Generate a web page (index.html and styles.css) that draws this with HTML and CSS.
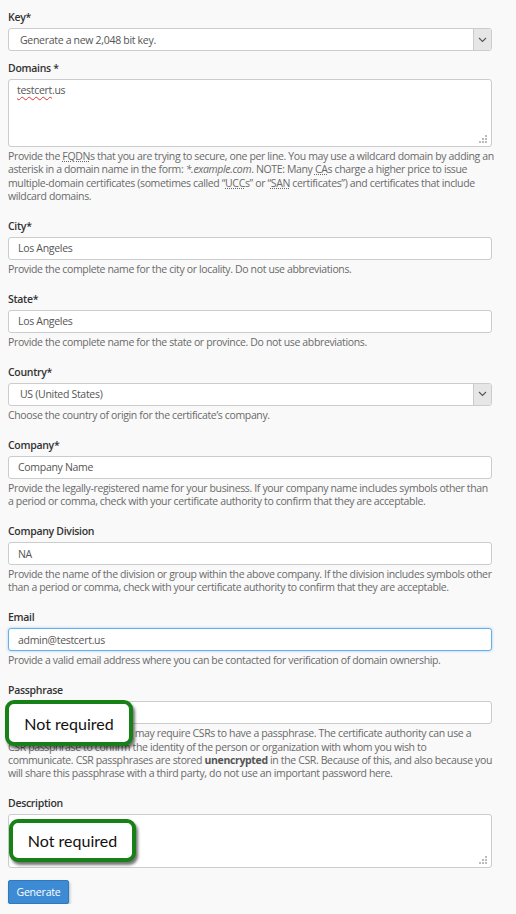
FILE: index.html
```html
<!DOCTYPE html>
<html>
<head>
<meta charset="utf-8">
<link rel="stylesheet" href="styles.css">
</head>
<body>
<form class="form">
  <div class="group tight">
    <div class="label">Key*</div>
    <div class="field select"><span class="value sel">Generate a new 2,048 bit key.</span><span class="arrow"><svg width="9" height="6" viewBox="0 0 9 6"><path d="M1 1l3.5 3.5L8 1" fill="none" stroke="#555" stroke-width="1.1"/></svg></span></div>
  </div>
  <div class="group">
    <div class="label">Domains *</div>
    <div class="field area domains"><span class="value"><span class="spell">testcert</span>.us</span><svg class="grip" width="8" height="8" viewBox="0 0 8 8"><g fill="#bbb"><rect x="6" y="0" width="2" height="2"/><rect x="3" y="3" width="2" height="2"/><rect x="6" y="3" width="2" height="2"/><rect x="0" y="6" width="2" height="2"/><rect x="3" y="6" width="2" height="2"/><rect x="6" y="6" width="2" height="2"/></g></svg></div>
    <p class="help">Provide the <abbr>FQDN</abbr>s that you are trying to secure, one per line. You may use a wildcard domain by adding an<br>asterisk in a domain name in the form: <em>*.example.com</em>. NOTE: Many <abbr>CA</abbr>s charge a higher price to issue<br>multiple-domain certificates (sometimes called “<abbr>UCC</abbr>s” or “<abbr>SAN</abbr> certificates”) and certificates that include<br>wildcard domains.</p>
  </div>
  <div class="group">
    <div class="label">City*</div>
    <div class="field"><span class="value">Los Angeles</span></div>
    <p class="help">Provide the complete name for the city or locality. Do not use abbreviations.</p>
  </div>
  <div class="group">
    <div class="label">State*</div>
    <div class="field"><span class="value">Los Angeles</span></div>
    <p class="help">Provide the complete name for the state or province. Do not use abbreviations.</p>
  </div>
  <div class="group">
    <div class="label">Country*</div>
    <div class="field select"><span class="value sel">US (United States)</span><span class="arrow"><svg width="9" height="6" viewBox="0 0 9 6"><path d="M1 1l3.5 3.5L8 1" fill="none" stroke="#555" stroke-width="1.1"/></svg></span></div>
    <p class="help">Choose the country of origin for the certificate’s company.</p>
  </div>
  <div class="group">
    <div class="label">Company*</div>
    <div class="field"><span class="value">Company Name</span></div>
    <p class="help">Provide the legally-registered name for your business. If your company name includes symbols other than<br>a period or comma, check with your certificate authority to confirm that they are acceptable.</p>
  </div>
  <div class="group">
    <div class="label">Company Division</div>
    <div class="field"><span class="value">NA</span></div>
    <p class="help">Provide the name of the division or group within the above company. If the division includes symbols other<br>than a period or comma, check with your certificate authority to confirm that they are acceptable.</p>
  </div>
  <div class="group">
    <div class="label">Email</div>
    <div class="field focus"><span class="value">admin@testcert.us</span></div>
    <p class="help">Provide a valid email address where you can be contacted for verification of domain ownership.</p>
  </div>
  <div class="group pass">
    <div class="label">Passphrase</div>
    <div class="field"><span class="value"></span></div>
    <p class="help">Some certificate authorities may require CSRs to have a passphrase. The certificate authority can use a<br>CSR passphrase to confirm the identity of the person or organization with whom you wish to<br>communicate. CSR passphrases are stored <strong>unencrypted</strong> in the CSR. Because of this, and also because you<br>will share this passphrase with a third party, do not use an important password here.</p>
    <div class="callout c1">Not required</div>
  </div>
  <div class="group desc">
    <div class="label">Description</div>
    <div class="field area description"><svg class="grip" width="8" height="8" viewBox="0 0 8 8"><g fill="#bbb"><rect x="6" y="0" width="2" height="2"/><rect x="3" y="3" width="2" height="2"/><rect x="6" y="3" width="2" height="2"/><rect x="0" y="6" width="2" height="2"/><rect x="3" y="6" width="2" height="2"/><rect x="6" y="6" width="2" height="2"/></g></svg></div>
    <div class="callout c2">Not required</div>
  </div>
  <div class="actions"><span class="btn">Generate</span></div>
</form>
</body>
</html>
```

FILE: styles.css
```css
html, body {
  margin: 0;
  padding: 0;
  background: #f9f9f9;
}
body {
  font-family: "Open Sans", "Noto Sans", sans-serif;
  color: #333;
}
.form {
  width: 484px;
  padding: 10px 8px 0 8px;
}
.group {
  position: relative;
  margin-bottom: 15.7px;
}
.group.tight {
  margin-bottom: 10px;
}
.label {
  font-size: 10.5px;
  font-weight: 600;
  line-height: 15px;
  margin-bottom: 3px;
  color: #333;
  letter-spacing: -0.3px;
}
.field {
  position: relative;
  box-sizing: border-box;
  height: 23px;
  background: #fff;
  border: 1px solid #ccc;
  border-radius: 3px;
  display: flex;
  align-items: center;
  font-size: 10.5px;
  color: #555;
  letter-spacing: -0.3px;
}
.value {
  padding-left: 9px;
}
.value.sel {
  padding-left: 11px;
  flex: 1;
}
.arrow {
  width: 17px;
  height: 21px;
  background: #e6e6e6;
  border-left: 1px solid #ccc;
  border-radius: 0 2px 2px 0;
  display: flex;
  align-items: center;
  justify-content: center;
}
.field.area {
  align-items: flex-start;
}
.domains {
  height: 68px;
}
.domains .value {
  padding-top: 3px;
  padding-left: 8px;
}
.description {
  height: 54px;
}
.grip {
  position: absolute;
  right: 4px;
  bottom: 3px;
}
.spell {
  text-decoration: underline wavy #d33;
  text-decoration-thickness: 1px;
  text-underline-offset: 2px;
}
.focus {
  border-color: #66afe9;
  box-shadow: 0 0 3px rgba(102, 175, 233, 0.6);
}
.help {
  margin: 3px 0 0 0;
  font-size: 10.5px;
  line-height: 13.3px;
  color: #6a6a6a;
  letter-spacing: -0.36px;
  white-space: nowrap;
}
.help abbr {
  text-decoration: underline dotted;
  text-underline-offset: 1px;
}
.help strong {
  color: #555;
  font-weight: 700;
}
.desc {
  margin-bottom: 12px;
}
.actions {
  display: flex;
}
.btn {
  display: inline-block;
  box-sizing: border-box;
  width: 61px;
  height: 24px;
  line-height: 22px;
  text-align: center;
  background: #3d8bd4;
  border: 1px solid #2f79bd;
  color: #fff;
  font-size: 10.5px;
  letter-spacing: -0.2px;
  border-radius: 2px;
  box-shadow: 1px 2px 3px rgba(0, 0, 0, 0.25);
}
.callout {
  position: absolute;
  box-sizing: border-box;
  background: #fff;
  border: 4px solid #178117;
  border-radius: 9px;
  box-shadow: 2px 3px 3px rgba(0, 0, 0, 0.55);
  font-family: "Lato", "Open Sans", sans-serif;
  font-size: 16px;
  color: #111;
  display: flex;
  align-items: center;
  justify-content: center;
}
.c1 {
  left: -3px;
  top: 17px;
  width: 128px;
  height: 46px;
}
.c2 {
  left: 1px;
  top: 23px;
  width: 127px;
  height: 43px;
}
```
